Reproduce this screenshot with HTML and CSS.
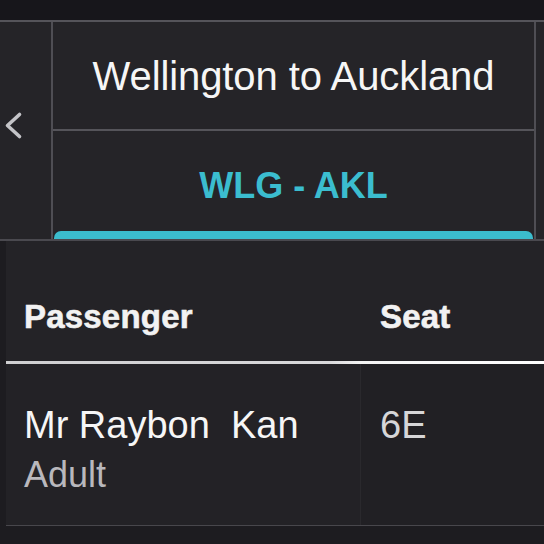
FILE: index.html
```html
<!DOCTYPE html>
<html>
<head>
<meta charset="utf-8">
<link rel="stylesheet" href="styles.css">
</head>
<body>
<div class="topstrip"></div>
<div class="header">
  <div class="back">
    <svg width="20" height="30" viewBox="0 0 20 30"><path d="M16.5 4.5 L4.5 15.5 L16.5 26.5" fill="none" stroke="#c4c4c8" stroke-width="3.6" stroke-linecap="round" stroke-linejoin="round"/></svg>
  </div>
  <div class="tab">
    <div class="title">Wellington to Auckland</div>
    <div class="code">WLG - AKL</div>
    <div class="bar"></div>
  </div>
  <div class="edge"></div>
</div>
<div class="table">
  <div class="thead">
    <div class="th th-pass">Passenger</div>
    <div class="th th-seat">Seat</div>
  </div>
  <div class="row">
    <div class="cell cell-pass">
      <div class="name">Mr Raybon&nbsp; Kan</div>
      <div class="type">Adult</div>
    </div>
    <div class="cell cell-seat">
      <div class="seat">6E</div>
    </div>
  </div>
</div>
</body>
</html>
```
FILE: styles.css
```css
* { box-sizing: border-box; margin: 0; padding: 0; }
html, body {
  width: 544px;
  height: 544px;
  overflow: hidden;
}
body {
  background: #1d1c20;
  font-family: "Liberation Sans", Arial, sans-serif;
  color: #f4f4f4;
}
.topstrip {
  height: 22px;
  background: #17161b;
  border-bottom: 2px solid #55545a;
}
.header {
  display: grid;
  grid-template-columns: 53px 483px 1fr;
  background: #252428;
  border-bottom: 2px solid #4a494f;
}
.back {
  border-right: 2px solid #4f4e54;
  display: flex;
  align-items: flex-start;
  padding-left: 3px;
  padding-top: 88px;
}
.tab {
  border-right: 2px solid #4f4e54;
  display: flex;
  flex-direction: column;
}
.title {
  height: 109px;
  border-bottom: 2px solid #55545a;
  text-align: center;
  font-size: 40px;
  line-height: 40px;
  padding-top: 34px;
  color: #f6f6f6;
  letter-spacing: -0.1px;
}
.code {
  height: 100px;
  text-align: center;
  font-size: 36px;
  line-height: 36px;
  font-weight: 700;
  color: #3bbdcf;
  padding-top: 37px;
}
.bar {
  height: 8px;
  margin: 0 1px 0 1px;
  background: #3bbccd;
  border-radius: 7px 7px 0 0;
}
.table {
  margin-left: 6px;
  background: #232226;
}
.thead {
  display: grid;
  grid-template-columns: 355px 1fr;
  background: #242327;
  border-bottom: 3px solid #f2f2f2;
  border-image: linear-gradient(to right, #cfcfd1 0%, #d8d8da 60%, #f4f4f4 66%, #ffffff 100%) 1;
}
.th {
  font-size: 33px;
  line-height: 33px;
  font-weight: 700;
  padding-top: 59px;
  padding-bottom: 28px;
  color: #f2f2f2;
  letter-spacing: 0.2px;
  -webkit-text-stroke: 0.6px #f2f2f2;
}
.th-pass { padding-left: 18px; }
.th-seat { padding-left: 19px; }
.row {
  display: grid;
  grid-template-columns: 355px 1fr;
  border-bottom: 1px solid #48474c;
}
.cell {
  padding-top: 42px;
  padding-bottom: 32px;
}
.cell-pass {
  background: #232226;
  padding-left: 18px;
  border-right: 1px solid #2a292d;
}
.cell-seat {
  background: #212024;
  padding-left: 19px;
}
.name {
  font-size: 38px;
  line-height: 38px;
  color: #f6f6f6;
}
.type {
  margin-top: 13px;
  font-size: 36px;
  line-height: 36px;
  color: #b9b8bd;
}
.seat {
  font-size: 38px;
  line-height: 38px;
  color: #d6d6d8;
}
```
